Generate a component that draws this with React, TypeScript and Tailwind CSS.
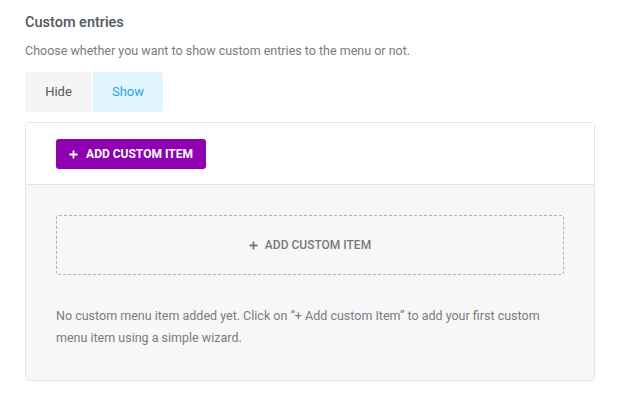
import React from "react";

function Plus({ className }: { className?: string }) {
  return (
    <svg viewBox="0 0 10 10" className={className} fill="none" stroke="currentColor" strokeWidth="2">
      <path d="M5 0.5v9M0.5 5h9" />
    </svg>
  );
}

export default function App() {
  return (
    <div className="w-[620px] h-[400px] bg-white pl-[25px] pr-[25px] pt-[14px] font-['Roboto',sans-serif]">
      <h2 className="text-[14.5px] leading-[18px] font-medium text-[#50575e]">Custom entries</h2>
      <p className="mt-[10px] text-[12.5px] leading-[18px] text-[#787c82]">
        Choose whether you want to show custom entries to the menu or not.
      </p>
      <div className="mt-[12px] flex w-fit rounded-[4px] overflow-hidden h-[40px] text-[13px]">
        <button className="w-[67px] bg-[#f5f5f5] text-[#50575e]">Hide</button>
        <button className="ml-[1px] w-[70px] bg-[#e1f5fe] text-[#2ea2e3]">Show</button>
      </div>
      <div className="mt-[10px] border border-[#e4e4e4] rounded-[4px] overflow-hidden w-[570px]">
        <div className="bg-white pt-[16px] pb-[15px] pl-[30px] border-b border-[#e4e4e4]">
          <button className="flex items-center gap-[8px] h-[30px] w-[150px] justify-center rounded-[3px] bg-[#8e00b0] text-white text-[12px] font-bold uppercase">
            <Plus className="w-[9px] h-[9px]" />
            Add custom item
          </button>
        </div>
        <div className="bg-[#f7f7f7] px-[30px] pt-[30px] pb-[31px]">
          <div className="h-[60px] border border-dashed border-[#b0b0b0] rounded-[3px] flex items-center justify-center gap-[7px] text-[#7a7a7a] text-[12px] font-medium uppercase">
            <Plus className="w-[9px] h-[9px]" />
            Add custom item
          </div>
          <p className="mt-[30px] text-[12.5px] leading-[22px] text-[#787c82]">
            No custom menu item added yet. Click on “+ Add custom Item” to add your first custom menu item using a simple wizard.
          </p>
        </div>
      </div>
    </div>
  );
}
